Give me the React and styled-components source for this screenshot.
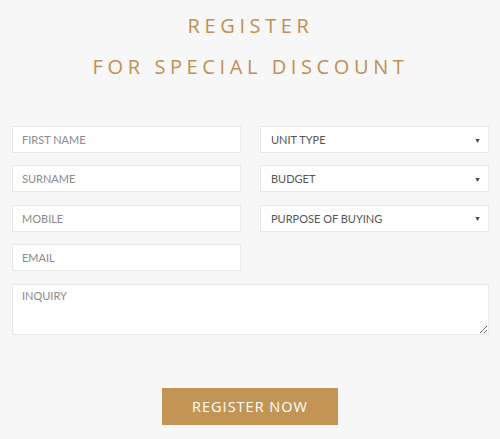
import React from 'react';
import styled, { createGlobalStyle } from 'styled-components';

const GlobalStyle = createGlobalStyle`
    html, body {
        margin: 0;
        padding: 0;
        background: #f7f7f7;
    }
`;

const Page = styled.div`
    width: 500px;
    height: 439px;
    box-sizing: border-box;
    padding: 5px 11px 0 12px;
    font-family: Lato, "Open Sans", sans-serif;
`;

const Title = styled.h1`
    margin: 0;
    text-align: center;
    color: #bf9053;
    font-family: "Open Sans", sans-serif;
    font-weight: 400;
    font-size: 20px;
    line-height: 41px;
    letter-spacing: 4.6px;
`;

const Form = styled.form`
    display: grid;
    grid-template-columns: 229px 229px;
    column-gap: 19px;
    row-gap: 12.4px;
    margin-top: 39px;
`;

const Field = styled.div`
    position: relative;
    grid-column: ${(p) => (p.wide ? '1 / span 2' : 'auto')};
`;

const Input = styled.input`
    box-sizing: border-box;
    width: 100%;
    height: 27px;
    border: 1px solid #e8e8e8;
    background: #fff;
    padding: 0 9px;
    font-family: Lato, "Open Sans", sans-serif;
    font-size: 11px;
    letter-spacing: 0;
    outline: none;

    &::placeholder {
        color: #8a8a8a;
    }
`;

const Select = styled.div`
    box-sizing: border-box;
    display: flex;
    align-items: center;
    justify-content: space-between;
    height: 27px;
    border: 1px solid #e8e8e8;
    background: #fff;
    padding: 0 7px 0 10px;
    color: #555;
    font-size: 11px;
    letter-spacing: 0;
`;

const Arrow = styled.span`
    font-size: 7px;
    color: #444;
`;

const TextArea = styled.textarea`
    box-sizing: border-box;
    display: block;
    width: 100%;
    height: 51px;
    border: 1px solid #e8e8e8;
    background: #fff;
    padding: 4px 9px;
    font-family: Lato, "Open Sans", sans-serif;
    font-size: 11px;
    outline: none;
    resize: vertical;

    &::placeholder {
        color: #8a8a8a;
    }
`;

const ButtonRow = styled.div`
    display: flex;
    justify-content: center;
    margin-top: 53px;
    padding-right: 1px;
`;

const Button = styled.button`
    width: 176px;
    height: 37px;
    border: none;
    background: #c29555;
    color: #fff;
    font-family: "Open Sans", sans-serif;
    font-size: 14.5px;
    letter-spacing: 1px;
    cursor: pointer;
`;

const selects = ['UNIT TYPE', 'BUDGET', 'PURPOSE OF BUYING'];
const inputs = ['FIRST NAME', 'SURNAME', 'MOBILE'];

const App = () => (
    <Page>
        <GlobalStyle />
        <Title>REGISTER</Title>
        <Title>FOR SPECIAL DISCOUNT</Title>
        <Form>
            {inputs.map((name, i) => (
                <React.Fragment key={name}>
                    <Field>
                        <Input placeholder={name} />
                    </Field>
                    <Field>
                        <Select>
                            {selects[i]}
                            <Arrow>▼</Arrow>
                        </Select>
                    </Field>
                </React.Fragment>
            ))}
            <Field>
                <Input placeholder="EMAIL" />
            </Field>
            <Field />
            <Field wide>
                <TextArea placeholder="INQUIRY" />
            </Field>
        </Form>
        <ButtonRow>
            <Button type="button">REGISTER NOW</Button>
        </ButtonRow>
    </Page>
);

export default App;
